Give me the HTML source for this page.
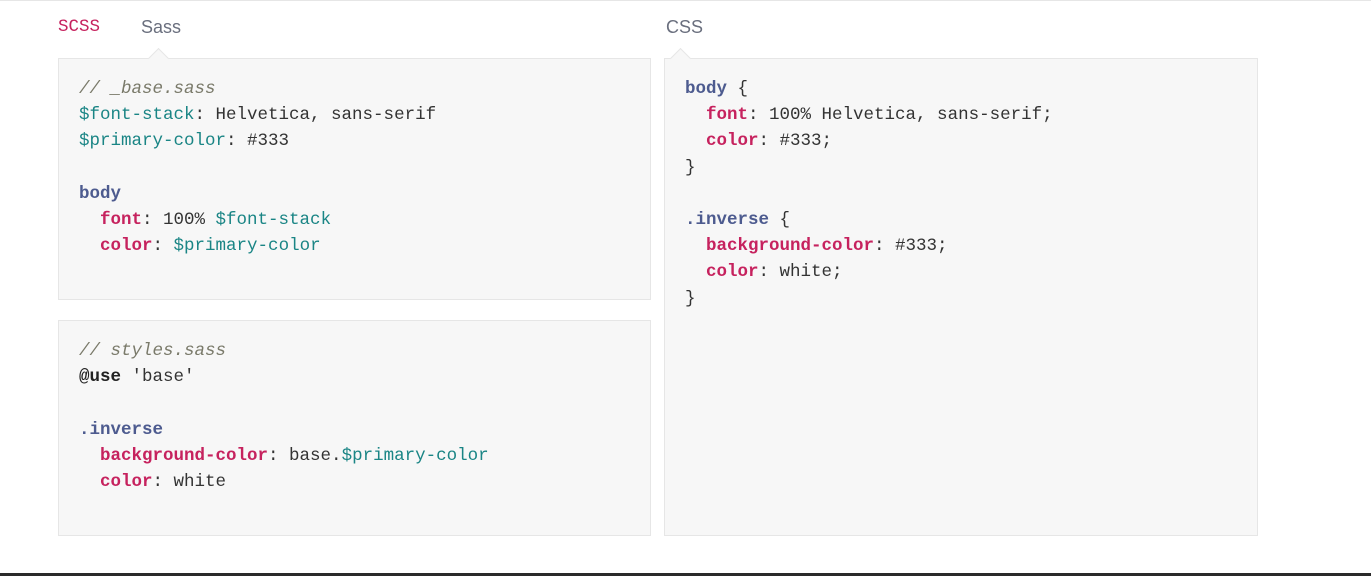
<!DOCTYPE html>
<html><head><meta charset="utf-8"><style>
body{margin:0;width:1371px;height:576px;background:#fff;position:relative;overflow:hidden;font-family:"Liberation Sans",sans-serif}
.top{position:absolute;left:0;top:0;width:1371px;height:1px;background:#e6e6e6}
.bot{position:absolute;left:0;top:573px;width:1371px;height:3px;background:#2a2a2a}
.tab{position:absolute;top:17px;font-size:18px;color:#6a6f7e}
.panel{position:absolute;background:#f7f7f7;border:1px solid #e6e6e6;box-sizing:border-box}
pre{margin:0;position:absolute;left:20px;top:17px;font-family:"Liberation Mono",monospace;font-size:17.5px;line-height:26.2px;color:#333}
.c{color:#7a7a6a;font-style:italic}.v{color:#1a8585}.p{color:#c6225e;font-weight:bold}.s{color:#4d5b8f;font-weight:bold}.k{color:#222;font-weight:bold}
.notch{position:absolute;width:14px;height:14px;background:#f7f7f7;border-left:1px solid #e6e6e6;border-top:1px solid #e6e6e6;transform:rotate(45deg)}
</style></head><body>
<div class="top"></div>
<div class="tab" style="left:58px;color:#c6225e;font-family:'Liberation Mono',monospace;font-size:17.5px;top:17px">SCSS</div>
<div class="tab" style="left:141px">Sass</div>
<div class="tab" style="left:666px">CSS</div>
<div class="panel" style="left:58px;top:58px;width:593px;height:242px">
<pre><span class="c">// _base.sass</span>
<span class="v">$font-stack</span>: Helvetica, sans-serif
<span class="v">$primary-color</span>: #333

<span class="s">body</span>
  <span class="p">font</span>: 100% <span class="v">$font-stack</span>
  <span class="p">color</span>: <span class="v">$primary-color</span></pre>
</div>
<div class="notch" style="left:151px;top:51px"></div>
<div class="panel" style="left:58px;top:320px;width:593px;height:216px">
<pre><span class="c">// styles.sass</span>
<span class="k">@use</span> 'base'

<span class="s">.inverse</span>
  <span class="p">background-color</span>: base.<span class="v">$primary-color</span>
  <span class="p">color</span>: white</pre>
</div>
<div class="panel" style="left:664px;top:58px;width:594px;height:478px">
<pre><span class="s">body</span> {
  <span class="p">font</span>: 100% Helvetica, sans-serif;
  <span class="p">color</span>: #333;
}

<span class="s">.inverse</span> {
  <span class="p">background-color</span>: #333;
  <span class="p">color</span>: white;
}</pre>
</div>
<div class="notch" style="left:673px;top:51px"></div>
<div class="bot"></div>
</body></html>
